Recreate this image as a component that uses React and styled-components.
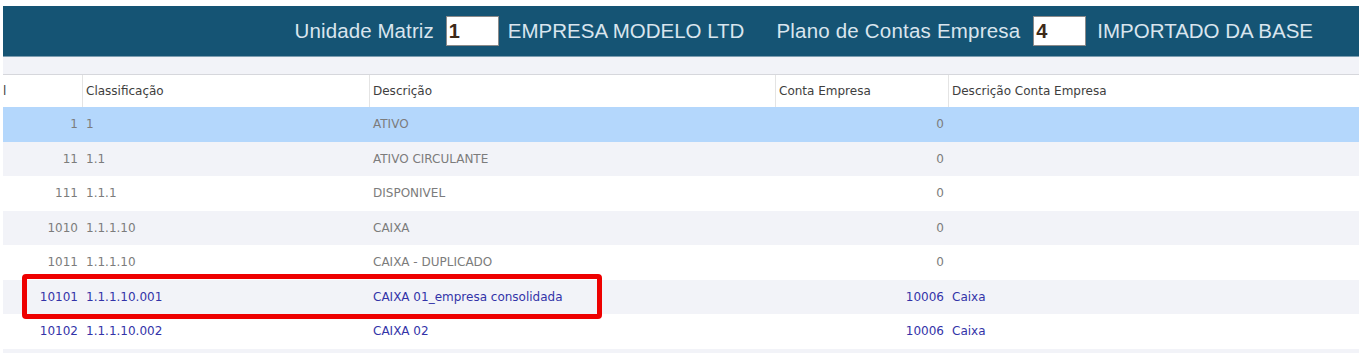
import React from "react";
import styled, { createGlobalStyle } from "styled-components";

const Global = createGlobalStyle`
  html, body { margin: 0; padding: 0; background: #ffffff; }
  body { font-family: "DejaVu Sans", "Liberation Sans", sans-serif; }
`;

const Page = styled.div`
  padding: 6px 0 0 3px;
  width: 1356px;
  height: 347px;
  overflow: hidden;
  background: #ffffff;
`;

const TopBar = styled.div`
  height: 51px;
  background: #155474;
  display: flex;
  align-items: center;
  justify-content: flex-end;
  gap: 32px;
  padding-right: 46px;
  box-sizing: border-box;
  border-bottom: 1px solid #7c9db0;
`;

const FieldGroup = styled.div`
  display: flex;
  align-items: center;
`;

const BarText = styled.span`
  font-family: "Liberation Sans", Arial, sans-serif;
  font-size: 20.5px;
  letter-spacing: ${(p) => p.$spacing || 0}px;
  color: #d9e5ee;
  white-space: nowrap;
`;

const CodeBox = styled.div`
  width: 53px;
  height: 30px;
  box-sizing: border-box;
  background: #ffffff;
  border: 1px solid #8a8a8a;
  margin: 0 ${(p) => p.$after}px 0 ${(p) => p.$before}px;
  font-family: "Liberation Sans", Arial, sans-serif;
  font-size: 20px;
  font-weight: bold;
  color: #3d2a18;
  line-height: 28px;
  padding-left: 2px;
`;

const SubBar = styled.div`
  height: 17px;
  background: #f2f3f8;
  border-bottom: 1px solid #d6d7dc;
`;

const cols = "79px 287px 406px 173px 1fr";

const HeaderRow = styled.div`
  display: grid;
  grid-template-columns: ${cols};
  height: 32px;
  background: #ffffff;
`;

const HeaderCell = styled.div`
  display: flex;
  align-items: center;
  font-size: 12px;
  color: #3e3e3e;
  border-left: ${(p) => (p.$first ? "none" : "1px solid #e4e4e4")};
  overflow: hidden;
  white-space: nowrap;
  padding-left: ${(p) => (p.$first ? 0 : 3)}px;
`;

const Row = styled.div`
  position: relative;
  display: grid;
  grid-template-columns: ${cols};
  height: 34.5px;
  background: ${(p) => (p.$selected ? "#b4d7fc" : p.$alt ? "#f2f3f8" : "#ffffff")};
  color: ${(p) => (p.$linked ? "#3333a8" : "#7c7c7c")};
`;

const Cell = styled.div`
  display: flex;
  align-items: center;
  justify-content: ${(p) => (p.$right ? "flex-end" : "flex-start")};
  font-size: 12px;
  padding: 0 ${(p) => (p.$right ? 4 : 0)}px 0 ${(p) => (p.$right ? 0 : 4)}px;
  white-space: nowrap;
  overflow: hidden;
`;

const Highlight = styled.div`
  position: absolute;
  z-index: 2;
  left: 19px;
  top: -6px;
  width: 580px;
  height: 45px;
  box-sizing: border-box;
  border: 5px solid #ee0000;
  border-radius: 4px;
  pointer-events: none;
`;

const rows = [
  { id: "1", cls: "1", desc: "ATIVO", conta: "0", descConta: "", selected: true },
  { id: "11", cls: "1.1", desc: "ATIVO CIRCULANTE", conta: "0", descConta: "" },
  { id: "111", cls: "1.1.1", desc: "DISPONIVEL", conta: "0", descConta: "" },
  { id: "1010", cls: "1.1.1.10", desc: "CAIXA", conta: "0", descConta: "" },
  { id: "1011", cls: "1.1.1.10", desc: "CAIXA - DUPLICADO", conta: "0", descConta: "" },
  { id: "10101", cls: "1.1.1.10.001", desc: "CAIXA 01_empresa consolidada", conta: "10006", descConta: "Caixa", linked: true, marked: true },
  { id: "10102", cls: "1.1.1.10.002", desc: "CAIXA 02", conta: "10006", descConta: "Caixa", linked: true },
  { id: "", cls: "", desc: "", conta: "", descConta: "" },
];

export default function App() {
  return (
    <>
      <Global />
      <Page>
        <TopBar>
          <FieldGroup>
            <BarText $spacing={0.1}>Unidade Matriz</BarText>
            <CodeBox $before={12} $after={9}>1</CodeBox>
            <BarText>EMPRESA MODELO LTD</BarText>
          </FieldGroup>
          <FieldGroup>
            <BarText $spacing={0.2}>Plano de Contas Empresa</BarText>
            <CodeBox $before={13} $after={11}>4</CodeBox>
            <BarText>IMPORTADO DA BASE</BarText>
          </FieldGroup>
        </TopBar>
        <SubBar />
        <HeaderRow>
          <HeaderCell $first>l</HeaderCell>
          <HeaderCell>Classificação</HeaderCell>
          <HeaderCell>Descrição</HeaderCell>
          <HeaderCell>Conta Empresa</HeaderCell>
          <HeaderCell>Descrição Conta Empresa</HeaderCell>
        </HeaderRow>
        {rows.map((r, i) => (
          <Row key={i} $selected={r.selected} $alt={i % 2 === 1} $linked={r.linked}>
            <Cell $right>{r.id}</Cell>
            <Cell>{r.cls}</Cell>
            <Cell>{r.desc}</Cell>
            <Cell $right>{r.conta}</Cell>
            <Cell>{r.descConta}</Cell>
            {r.marked && <Highlight />}
          </Row>
        ))}
      </Page>
    </>
  );
}
